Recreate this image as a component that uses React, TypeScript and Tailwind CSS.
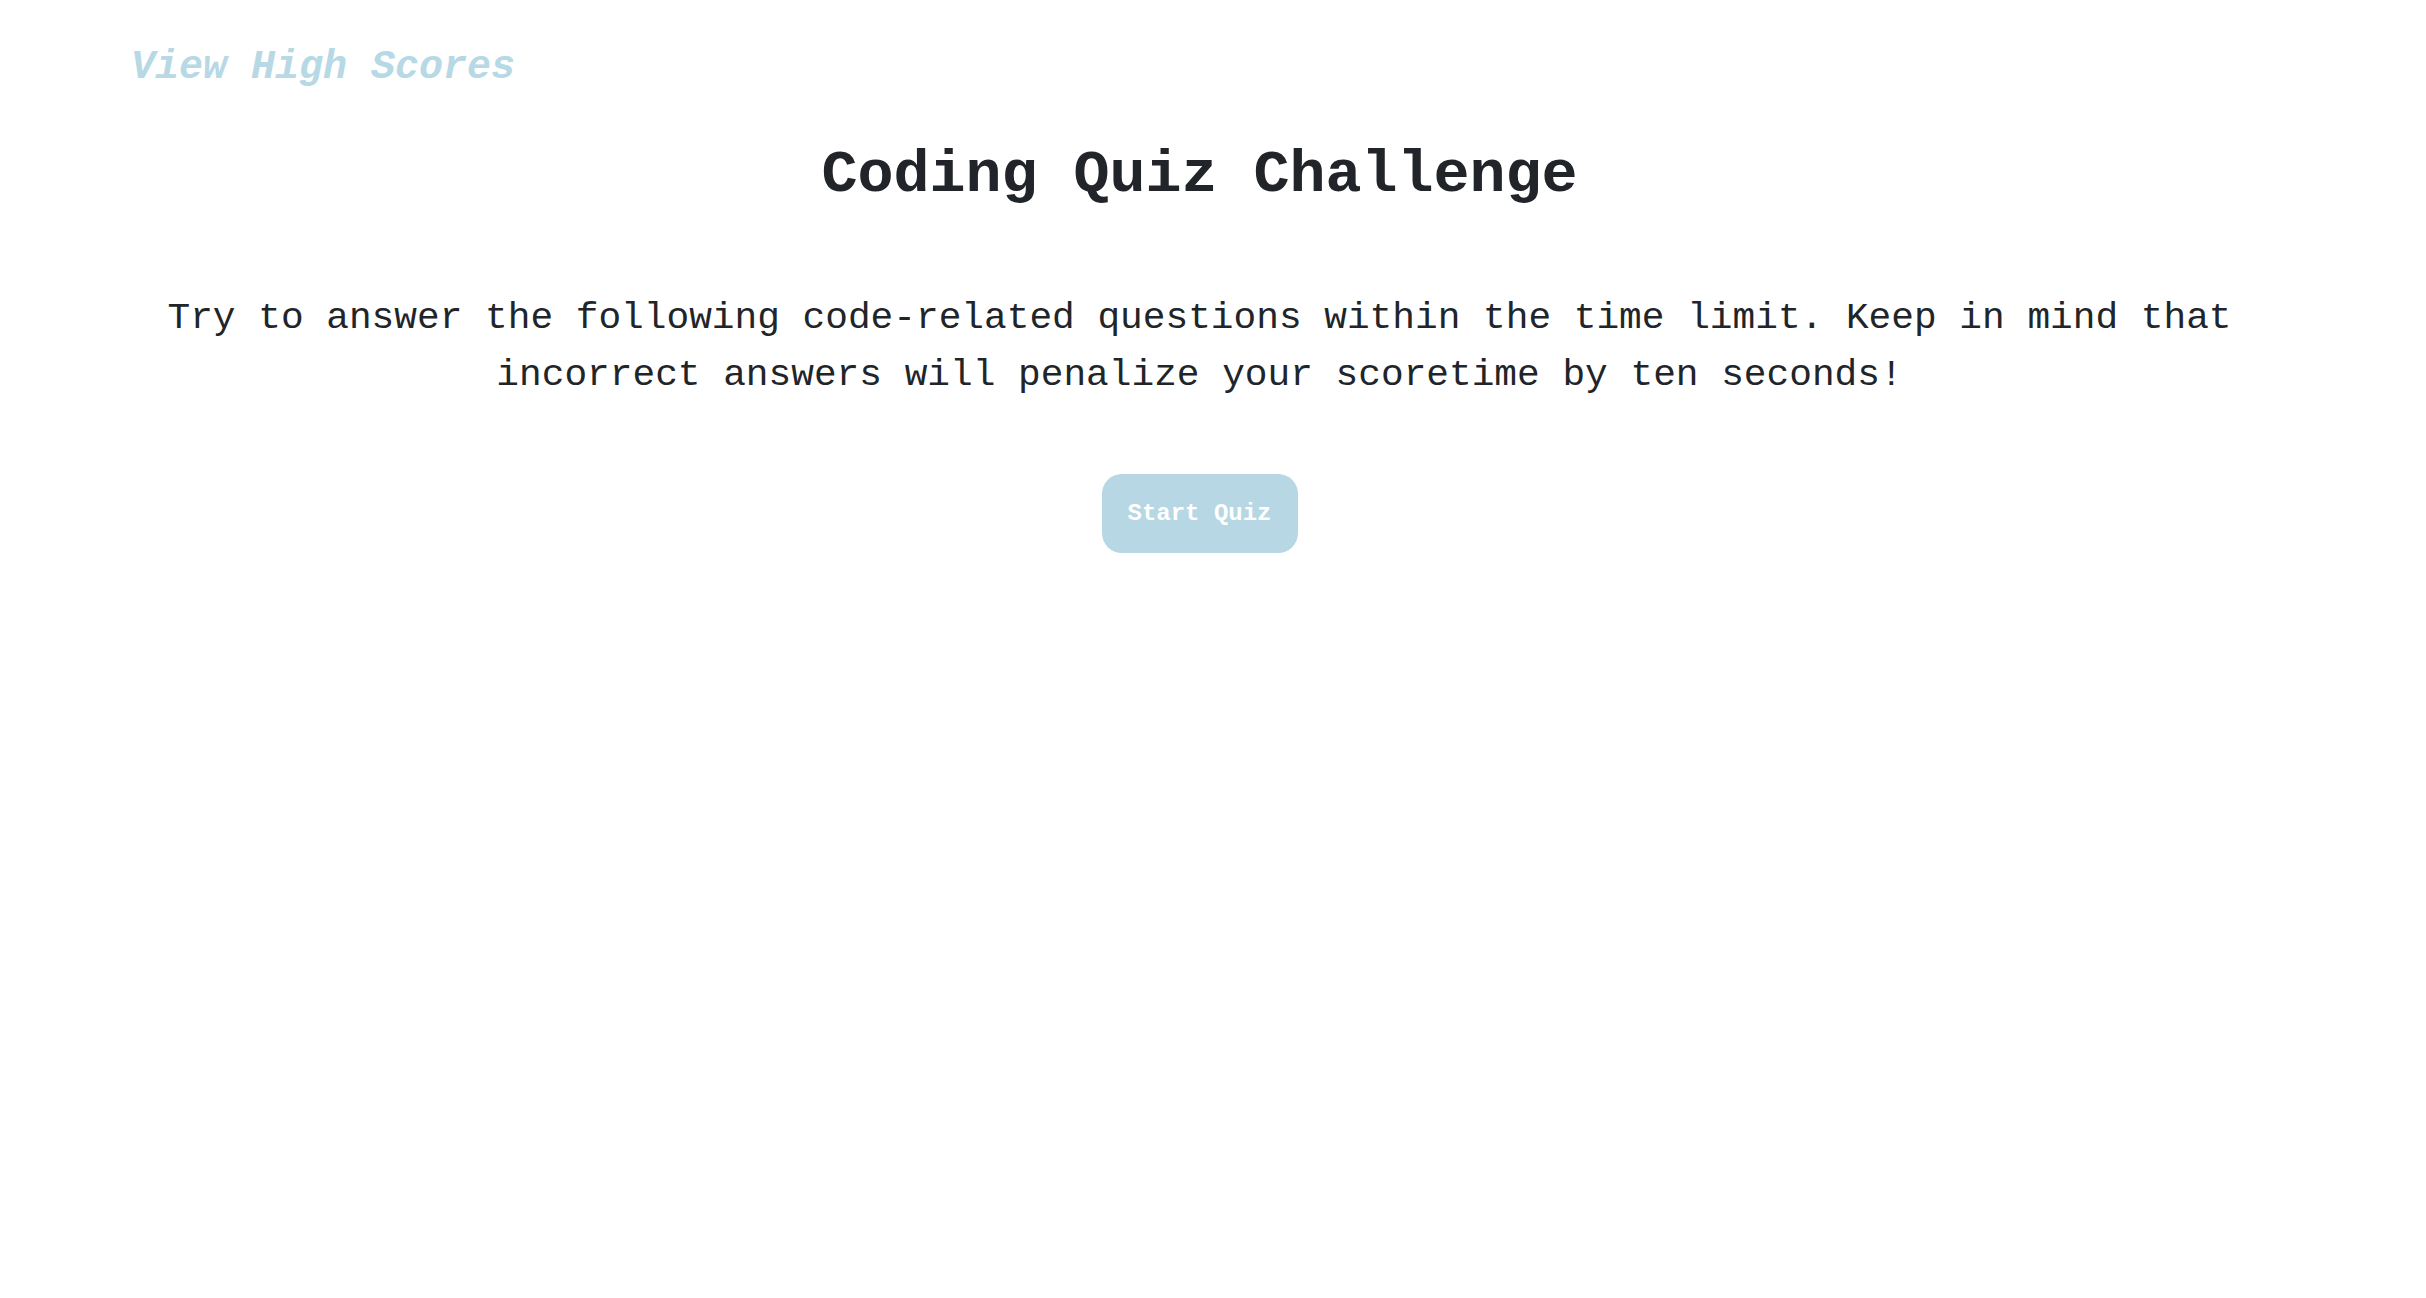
export default function App() {
  return (
    <div className="min-h-[1298px] bg-white text-[#212529] font-['Liberation_Mono','Courier_New',monospace]">
      <header className="px-[131px] pt-[43px]">
        <a href="#" className="text-[40px] leading-[50px] italic font-bold text-[#b7d8e5]">
          View High Scores
        </a>
      </header>

      <main className="flex flex-col items-center text-center pr-[27px]">
        <h1 className="mt-[46px] text-[60px] leading-[72px] font-bold">Coding Quiz Challenge</h1>
        <p className="mt-[79px] px-[140px] text-[37.8px] leading-[57px]">
          Try to answer the following code-related questions within the time limit. Keep in mind that incorrect answers will penalize your scoretime by ten seconds!
        </p>
        <button className="mt-[70px] w-[196px] h-[79px] rounded-[20px] bg-[#b6d7e3] text-white text-[24px] font-bold">
          Start Quiz
        </button>
      </main>
    </div>
  );
}
